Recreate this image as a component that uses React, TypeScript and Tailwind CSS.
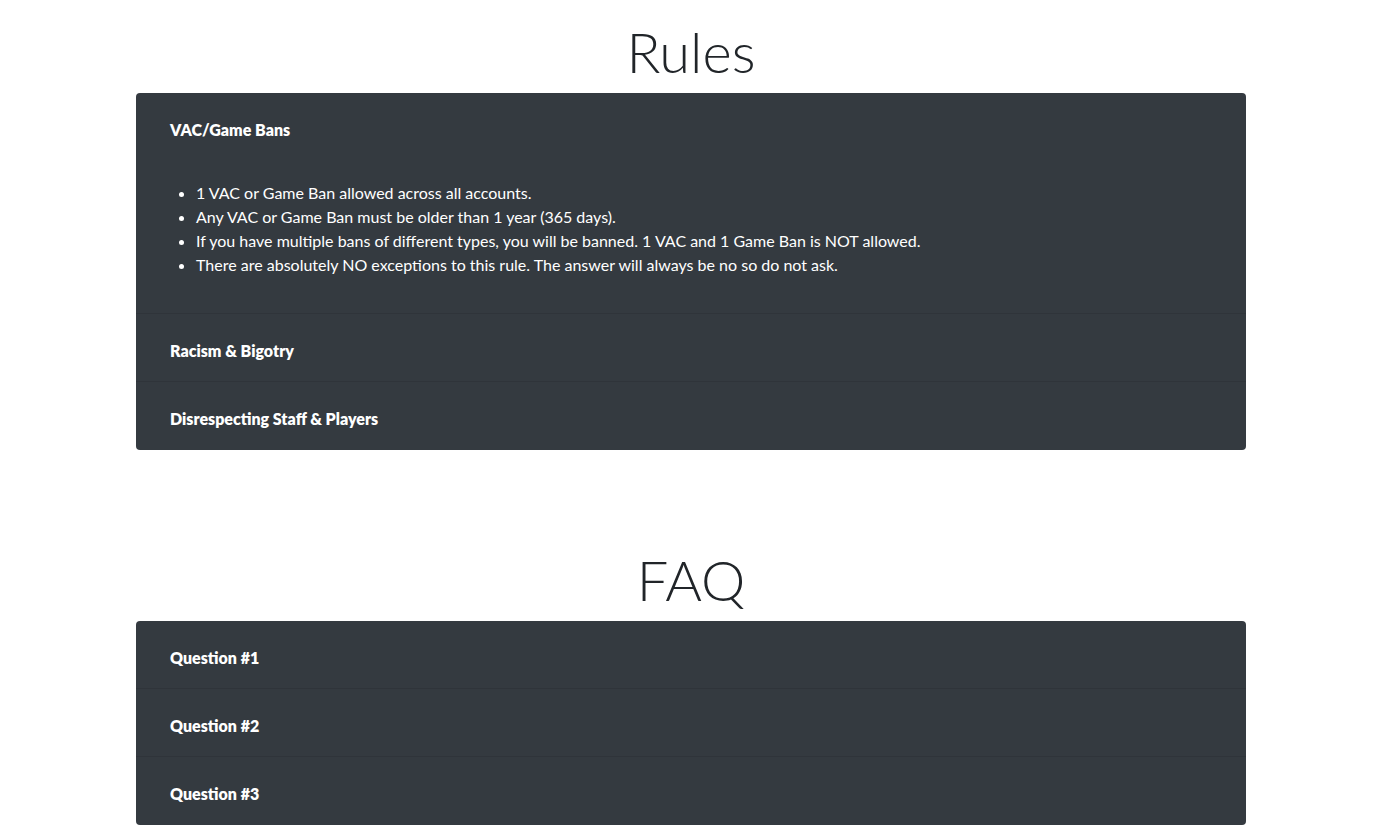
const rules = [
  "1 VAC or Game Ban allowed across all accounts.",
  "Any VAC or Game Ban must be older than 1 year (365 days).",
  "If you have multiple bans of different types, you will be banned. 1 VAC and 1 Game Ban is NOT allowed.",
  "There are absolutely NO exceptions to this rule. The answer will always be no so do not ask.",
];

const font = { fontFamily: '"Segoe UI", Lato, "Open Sans", sans-serif' };

function Row({ title, children, last }: { title: string; children?: React.ReactNode; last?: boolean }) {
  return (
    <div className={last ? "" : "border-b border-[#2f343a]"}>
      <div
        className={
          "px-[34px] pt-[25px] text-[16px] leading-[24px] font-extrabold text-white " +
          (last || children ? "pb-[19px]" : "pb-[18px]")
        }
      >
        {title}
      </div>
      {children}
    </div>
  );
}

export default function App() {
  return (
    <div className="flex min-h-screen justify-center bg-white pl-[2px] text-[#212529]" style={font}>
      <div className="w-[1110px] pt-[18px]">
        <h1 className="mb-2 text-center text-[56px] leading-[67px] font-light">Rules</h1>
        <div className="overflow-hidden rounded-[4px] bg-[#343a40]">
          <Row title="VAC/Game Bans">
            <div className="px-[34px] pt-[20px] pb-[36px]">
              <ul className="list-disc pl-[26px] text-[16px] leading-[24px] text-white">
                {rules.map((r) => (
                  <li key={r}>{r}</li>
                ))}
              </ul>
            </div>
          </Row>
          <Row title="Racism & Bigotry" />
          <Row title="Disrespecting Staff & Players" last />
        </div>

        <h1 className="mt-[96px] mb-2 text-center text-[56px] leading-[67px] font-light">FAQ</h1>
        <div className="overflow-hidden rounded-[4px] bg-[#343a40]">
          <Row title="Question #1" />
          <Row title="Question #2" />
          <Row title="Question #3" last />
        </div>
      </div>
    </div>
  );
}
